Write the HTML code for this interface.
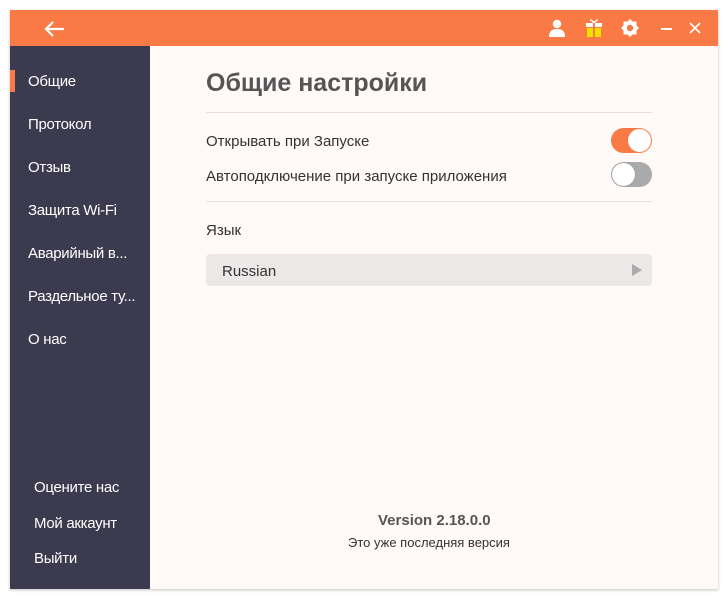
<!DOCTYPE html>
<html><head><meta charset="utf-8"><style>
*{margin:0;padding:0;box-sizing:border-box}
body{width:728px;height:599px;background:#fff;font-family:"Liberation Sans",sans-serif;position:relative;overflow:hidden}
.win{position:absolute;left:10px;top:10px;width:708px;height:579px;background:#fffaf8;box-shadow:0 1px 3px rgba(0,0,0,.25)}
.bar{position:absolute;left:0;top:0;width:708px;height:36px;background:#fa7a45}
.side{position:absolute;left:0;top:36px;width:140px;height:543px;background:#3b3a4e;color:#fff;font-size:15px}
.side div{position:absolute;left:18px;white-space:nowrap;letter-spacing:-0.3px}
.act{position:absolute;left:0;top:24px;width:5px;height:22px;background:#fa7a45}
.t{position:absolute;color:#333;white-space:nowrap}
.tog{position:absolute;width:41px;height:25px;border-radius:13px}
.knob{position:absolute;top:1px;width:23px;height:23px;border-radius:50%;background:#fff}
.hr{position:absolute;left:196px;width:446px;height:1px;background:#e4e0de}
</style></head><body>
<div class="win">
<div class="bar">
<svg style="position:absolute;left:34px;top:11px" width="22" height="16" viewBox="0 0 22 16"><path d="M2 8H20M9 1L2 8L9 15" stroke="#fff" stroke-width="2.2" fill="none"/></svg>
<svg style="position:absolute;left:538px;top:9px" width="18" height="18" viewBox="0 0 18 18"><circle cx="9" cy="5" r="4.2" fill="#fff"/><path d="M1 18C1 12 4 10 9 10C14 10 17 12 17 18Z" fill="#fff"/></svg>
<svg style="position:absolute;left:575px;top:8px" width="18" height="20" viewBox="0 0 18 20"><path d="M5 2C7 2 9 5 9 5C9 5 11 2 13 2" stroke="#fff" stroke-width="1.5" fill="none"/><rect x="1" y="5" width="16" height="4" fill="#fff"/><rect x="2" y="10" width="14" height="9" fill="#f4e000"/><rect x="8" y="5" width="2" height="14" fill="#fa7a45"/></svg>
<svg style="position:absolute;left:610px;top:8px" width="20" height="20" viewBox="0 0 20 20"><path d="M10 1L12.5 3.5H16.5V7.5L19 10L16.5 12.5V16.5H12.5L10 19L7.5 16.5H3.5V12.5L1 10L3.5 7.5V3.5H7.5Z" fill="#fff"/><circle cx="10" cy="10" r="3.2" fill="#fa7a45"/></svg>
<div style="position:absolute;left:651px;top:18px;width:11px;height:2px;background:#fff"></div>
<svg style="position:absolute;left:679px;top:12px" width="12" height="12" viewBox="0 0 12 12"><path d="M1 1L11 11M11 1L1 11" stroke="#fff" stroke-width="1.6"/></svg>
</div>
<div class="side">
<div class="act" style="left:0"></div>
<div style="top:27px">Общие</div>
<div style="top:70px">Протокол</div>
<div style="top:113px">Отзыв</div>
<div style="top:156px">Защита Wi-Fi</div>
<div style="top:199px">Аварийный в...</div>
<div style="top:242px">Раздельное ту...</div>
<div style="top:285px">О нас</div>
<div style="top:433px;left:24px">Оцените нас</div>
<div style="top:469px;left:24px">Мой аккаунт</div>
<div style="top:504px;left:24px">Выйти</div>
</div>
<div class="t" style="left:196px;top:59px;font-size:25px;font-weight:bold;color:#555">Общие настройки</div>
<div class="hr" style="top:102px"></div>
<div class="t" style="left:196px;top:123px;font-size:15px">Открывать при Запуске</div>
<div class="tog" style="left:601px;top:118px;background:#fa7a45"><div class="knob" style="left:17px"></div></div>
<div class="t" style="left:196px;top:158px;font-size:15px">Автоподключение при запуске приложения</div>
<div class="tog" style="left:601px;top:152px;background:#aaa9ab"><div class="knob" style="left:1px;box-shadow:0 0 1px #777"></div></div>
<div class="hr" style="top:191px"></div>
<div class="t" style="left:196px;top:212px;font-size:15px">Язык</div>
<div style="position:absolute;left:196px;top:244px;width:446px;height:32px;background:#ebe8e7;border-radius:4px"></div>
<div class="t" style="left:212px;top:253px;font-size:15px">Russian</div>
<svg style="position:absolute;left:622px;top:254px" width="10" height="12" viewBox="0 0 10 12"><path d="M0 0L10 6L0 12Z" fill="#aaa"/></svg>
<div class="t" style="left:368px;top:502px;font-size:15px;font-weight:bold;color:#555">Version 2.18.0.0</div>
<div class="t" style="left:338px;top:525px;font-size:13px">Это уже последняя версия</div>
</div>
</body></html>
